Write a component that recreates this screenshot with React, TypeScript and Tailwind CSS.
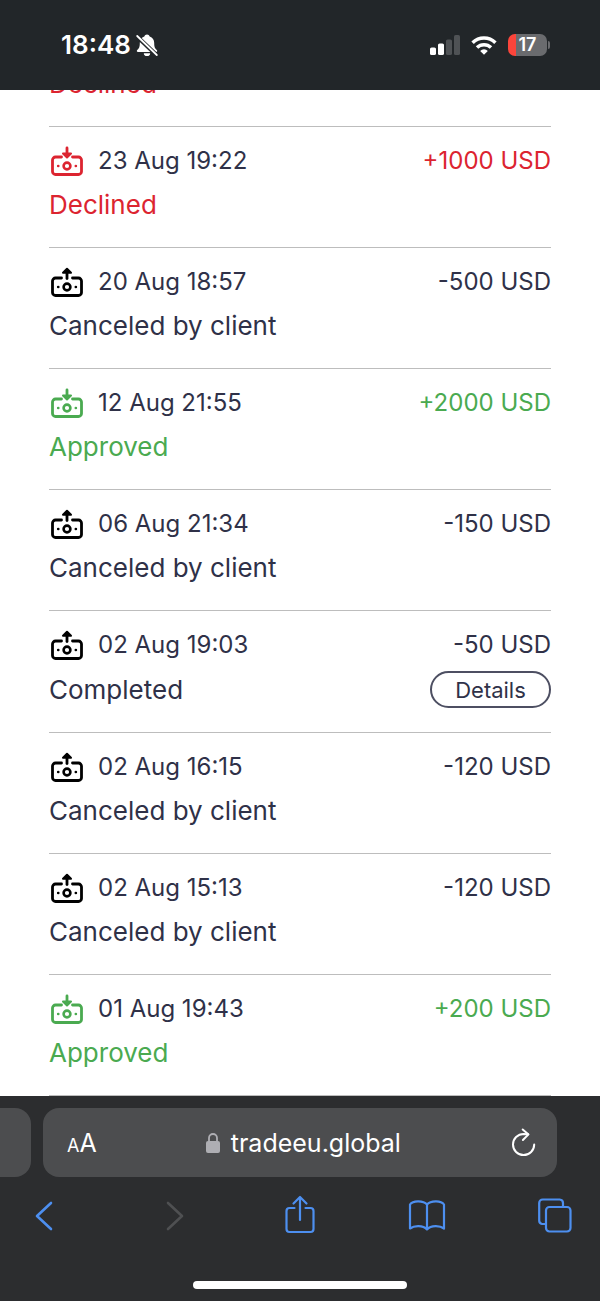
type Status = 'Declined' | 'Canceled by client' | 'Approved' | 'Completed'

type Transaction = {
  date: string
  amount: number
  status: Status
}

const TRANSACTIONS: Transaction[] = [
  { date: '23 Aug 19:22', amount: 1000, status: 'Declined' },
  { date: '20 Aug 18:57', amount: -500, status: 'Canceled by client' },
  { date: '12 Aug 21:55', amount: 2000, status: 'Approved' },
  { date: '06 Aug 21:34', amount: -150, status: 'Canceled by client' },
  { date: '02 Aug 19:03', amount: -50, status: 'Completed' },
  { date: '02 Aug 16:15', amount: -120, status: 'Canceled by client' },
  { date: '02 Aug 15:13', amount: -120, status: 'Canceled by client' },
  { date: '01 Aug 19:43', amount: 200, status: 'Approved' },
]

const STATUS_COLORS: Record<Status, string> = {
  Declined: 'text-[#dc2430]',
  Approved: 'text-[#4aaa50]',
  'Canceled by client': 'text-[#2f3148]',
  Completed: 'text-[#2f3148]',
}

const MoneyIcon = ({ deposit }: { deposit: boolean }) => (
  <svg viewBox="0 -1 36 32" className="h-8 w-9" fill="none" stroke="currentColor" strokeWidth="2.8" strokeLinecap="round" strokeLinejoin="round">
    <path d="M12.5 11h-6a3 3 0 0 0-3 3v11.5a3 3 0 0 0 3 3h23a3 3 0 0 0 3-3V14a3 3 0 0 0-3-3h-6" />
    <circle cx="18" cy="20" r="3.4" strokeWidth="2.6" />
    <path d="M9.2 20h.1M26.8 20h.1" strokeWidth="2.6" />
    {deposit ? (
      <>
        <path d="M18 2v6" />
        <path d="M14 7.5 18 11.5l4-4z" fill="currentColor" strokeWidth="2" />
      </>
    ) : (
      <>
        <path d="M18 5v6.5" />
        <path d="M14 5.8 18 1.8l4 4z" fill="currentColor" strokeWidth="2" />
      </>
    )}
  </svg>
)

const TransactionRow = ({ date, amount, status }: Transaction) => {
  const color = STATUS_COLORS[status]
  const deposit = amount > 0

  return (
    <li className="border-b border-[#bdbdbd] pt-4 pb-6">
      <div className="flex items-center justify-between text-[24px] leading-9">
        <div className="flex items-center gap-[13px]">
          <span className={deposit ? color : 'text-black'}>
            <MoneyIcon deposit={deposit} />
          </span>
          <span>{date}</span>
        </div>
        <span className={color}>{deposit ? `+${amount}` : amount} USD</span>
      </div>
      <div className="mt-2 flex items-center justify-between text-[26px] leading-9">
        <span className={color}>{status}</span>
        {status === 'Completed' && (
          <button className="h-[37px] w-[121px] rounded-full border-2 border-[#4d4f62] text-[22px] leading-8">
            Details
          </button>
        )}
      </div>
    </li>
  )
}

const StatusBar = () => (
  <header className="z-10 flex h-[90px] shrink-0 items-center justify-between bg-[#222629] pr-[50px] pl-[61px] text-white">
    <div className="flex items-center gap-1">
      <span className="text-[26px] leading-8 font-semibold">18:48</span>
      <svg viewBox="0 0 24 24" className="size-6" fill="currentColor">
        <path d="M12 1.5c-1.300 0-2.300.8-2.700 1.900C6.400 4.400 4.800 6.800 4.800 10c0 4.500-1 5.500-2.600 7-.8.800-.4 2 .8 2h18c1.200 0 1.600-1.200.8-2-1.600-1.500-2.600-2.500-2.600-7 0-3.200-1.600-5.600-4.500-6.600C14.300 2.300 13.300 1.500 12 1.500zM8.800 20.200a3.200 2.800 0 0 0 6.400 0z" />
        <path d="M1.500 3 22 22.500" stroke="#222629" strokeWidth="4.200" />
        <path d="M2.200 3 21.800 22" stroke="currentColor" strokeWidth="1.800" strokeLinecap="round" />
      </svg>
    </div>
    <div className="flex items-center gap-[11px]">
      <svg viewBox="0 0 30 20" className="h-5 w-[30px]" fill="currentColor">
        <rect x="0" y="12.5" width="6" height="7.5" rx="1.6" />
        <rect x="8" y="8.5" width="6" height="11.5" rx="1.6" />
        <rect x="16" y="4.5" width="6" height="15.5" rx="1.6" fill="#4f5255" />
        <rect x="24" y="0" width="6" height="20" rx="1.6" fill="#4f5255" />
      </svg>
      <svg viewBox="0 0 26 20" className="h-5 w-[26px]" fill="none" stroke="currentColor" strokeWidth="3.5">
        <path d="M1.6 7.8a16.2 16.2 0 0 1 22.800 0" />
        <path d="M6 12.500a10 10 0 0 1 14 0" />
        <path d="M13 19.800 9.200 16a5.200 5.200 0 0 1 7.600 0z" fill="currentColor" stroke="none" />
      </svg>
      <div className="flex items-center gap-px">
        <div className="flex h-[22px] w-[39px] items-center justify-center rounded-[7px] bg-linear-to-r from-[#fb453b] from-20% to-[#6a6b6e] to-20% text-[18px] leading-[22px] font-semibold">
          17
        </div>
        <div className="h-2 w-0.5 rounded-r-full bg-[#6a6b6e]" />
      </div>
    </div>
  </header>
)

const BrowserBar = () => (
  <footer className="shrink-0 bg-[#2c2d2f] pt-3 text-[#4d8ff0]">
    <div className="flex h-[69px] gap-3 pr-[43px]">
      <div className="w-[31px] rounded-r-[16px] bg-[#4c4d4f]" />
      <div className="flex flex-1 items-center justify-between rounded-[16px] bg-[#4c4d4f] pr-5 pl-6 text-white">
        <button className="flex items-baseline pt-1 leading-8" aria-label="Page settings">
          <span className="text-[18px]">A</span>
          <span className="text-[25px]">A</span>
        </button>
        <a href="#" className="flex items-center gap-2.5 text-[25px] leading-8">
          <svg viewBox="0 0 16 22" className="h-[22px] w-4">
            <rect x="1" y="9" width="14" height="12" rx="2" fill="#aeaeb3" />
            <path d="M4 10V6a4 4 0 0 1 8 0v4" fill="none" stroke="#aeaeb3" strokeWidth="1.8" />
          </svg>
          tradeeu.global
        </a>
        <button aria-label="Reload">
          <svg viewBox="0 0 28 30" className="h-[30px] w-7" fill="none" stroke="currentColor" strokeWidth="2" strokeLinecap="round" strokeLinejoin="round">
            <path d="M19 6.300 14.600 5.900A10.600 10.600 0 1 0 25.200 16.500" />
            <path d="M13.700 1.500 19.500 6.400 13.900 12" />
          </svg>
        </button>
      </div>
    </div>
    <nav className="mt-[18px] flex h-10 items-center justify-between px-[26px]">
      <button aria-label="Back">
        <svg viewBox="0 0 36 40" className="h-10 w-9" fill="none" stroke="currentColor" strokeWidth="2.6" strokeLinecap="round" strokeLinejoin="round">
          <path d="M25 8 11 21l14 13" />
        </svg>
      </button>
      <button aria-label="Forward" disabled className="text-[#4f5052]">
        <svg viewBox="0 0 36 40" className="h-10 w-9" fill="none" stroke="currentColor" strokeWidth="2.6" strokeLinecap="round" strokeLinejoin="round">
          <path d="m15 8 14 13-14 13" />
        </svg>
      </button>
      <button aria-label="Share">
        <svg viewBox="0 0 36 40" className="h-10 w-9" fill="none" stroke="currentColor" strokeWidth="2.2" strokeLinecap="round" strokeLinejoin="round">
          <path d="M14.500 13h-5a3 3 0 0 0-3 3v18a3 3 0 0 0 3 3h21a3 3 0 0 0 3-3V16a3 3 0 0 0-3-3h-5" />
          <path d="M20 25V2.500M13.500 8.500 20 2l6.500 6.500" />
        </svg>
      </button>
      <button aria-label="Bookmarks">
        <svg viewBox="0 0 40 40" className="size-10" fill="none" stroke="currentColor" strokeWidth="2.2" strokeLinecap="round" strokeLinejoin="round">
          <path d="M20 9.500C16.500 5.500 6 5 3 9.500v24c4-3 13-3.500 17 1 4-4.500 13-4 17-1v-24c-3-4.500-13.500-4-17 0zM20 9.500v25" />
        </svg>
      </button>
      <button aria-label="Tabs">
        <svg viewBox="2 0 36 40" className="h-10 w-9" fill="none" stroke="currentColor" strokeWidth="2.2" strokeLinejoin="round">
          <rect x="10" y="12" width="24.500" height="24.500" rx="3.500" />
          <path d="M10 29H6a3.500 3.500 0 0 1-2.800-3.500V8a3.500 3.500 0 0 1 3.500-3.500h17A3.500 3.500 0 0 1 27 8v4" />
        </svg>
      </button>
    </nav>
    <div className="flex h-[66px] justify-center pt-[46px]">
      <div className="h-2 w-[214px] rounded-full bg-white" />
    </div>
  </footer>
)

const App = () => (
  <div className="flex h-screen flex-col bg-white font-['Inter','Liberation_Sans',sans-serif]">
    <StatusBar />
    <main className="flex min-h-0 flex-1 flex-col justify-end overflow-hidden px-[49px] text-[#2f3148]">
      <ul>
        {/* older entry, scrolled under the status bar */}
        <li className="border-b border-[#bdbdbd] pb-6 text-[26px] leading-9 text-[#dc2430]">Declined</li>
        {TRANSACTIONS.map(tx => (
          <TransactionRow key={tx.date} {...tx} />
        ))}
      </ul>
    </main>
    <BrowserBar />
  </div>
)

export default App
